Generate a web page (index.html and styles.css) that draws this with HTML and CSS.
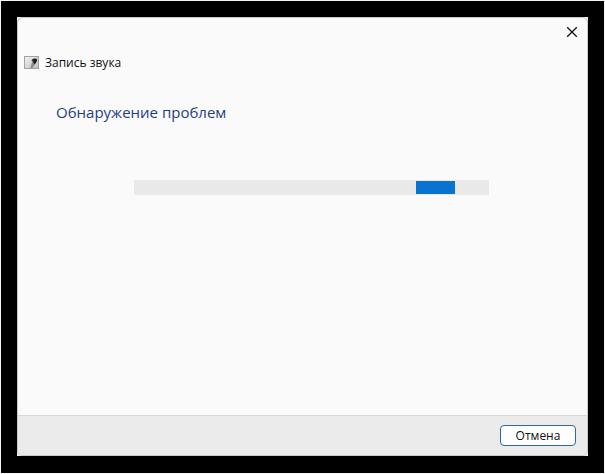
FILE: index.html
```html
<!DOCTYPE html>
<html lang="ru">
<head>
  <meta charset="UTF-8">
  <meta name="viewport" content="width=device-width, initial-scale=1.0">
  <title>Запись звука</title>
  <link rel="stylesheet" href="styles.css">
</head>
<body>

  <div class="backdrop">
    <div class="window-frame">
      <div class="window">

        <div class="title-bar">
          <button class="close-btn" type="button" aria-label="Закрыть">
            <svg width="12" height="12" viewBox="0 0 12 12">
              <path d="M1.2 1.2 L10.8 10.8 M10.8 1.2 L1.2 10.8" fill="none" stroke="#111" stroke-width="1.3"/>
            </svg>
          </button>
        </div>

        <header class="app-header">
          <!-- Microphone icon -->
          <svg class="app-icon" width="16" height="14" viewBox="0 0 16 14" aria-hidden="true">
            <defs>
              <linearGradient id="tile" x1="0" y1="0" x2="1" y2="1">
                <stop offset="0" stop-color="#f4f4f4"/>
                <stop offset="1" stop-color="#bdbdbd"/>
              </linearGradient>
            </defs>
            <rect x="0.5" y="0.5" width="14" height="12" fill="url(#tile)" stroke="#a2a2a2"/>
            <path d="M8.2 5.6 L11.4 7.6 L8.4 12.2 L6.2 12.2 Z" fill="#8c8c8c"/>
            <path d="M8 3.6 Q10.4 1.8 12.8 2.8 Q13.6 4.4 12.2 6.4 L10.4 8.6 L9.4 6.2 Z" fill="#1c1c1c"/>
            <circle cx="8.6" cy="4.6" r="1" fill="#444"/>
          </svg>
          <span class="app-name">Запись звука</span>
        </header>

        <main class="content">
          <h1 class="heading" id="heading">Обнаружение проблем</h1>
          <div class="progress" role="progressbar" aria-labelledby="heading">
            <div class="progress-chunk"></div>
          </div>
        </main>

        <footer class="footer">
          <button class="cancel-btn" type="button">Отмена</button>
        </footer>

      </div>
    </div>
  </div>

</body>
</html>
```
FILE: styles.css
```css
* {
  margin: 0;
  padding: 0;
  box-sizing: border-box;
}

body {
  min-height: 100vh;
  padding: 1px;
  display: flex;
  background-color: #f4f4f4;
  font-family: "Open Sans", "Noto Sans", sans-serif;
  font-size: 12px;
  color: #111;
}

/* Black area around the window */
.backdrop {
  flex: 1;
  display: flex;
  padding: 16px 16px 17px;
  background-color: #000;
}

/* Light corners behind the rounded window */
.window-frame {
  flex: 1;
  display: flex;
  background-color: #ececec;
}

.window {
  flex: 1;
  display: flex;
  flex-direction: column;
  overflow: hidden;
  border: 1px solid #c8c8c8;
  border-radius: 6px;
  background-color: #fafafa;
}

/* Title bar */
.title-bar {
  display: flex;
  justify-content: flex-end;
}

.close-btn {
  width: 30px;
  height: 28px;
  display: flex;
  align-items: center;
  justify-content: center;
  border: none;
  background: none;
}

.app-header {
  display: flex;
  align-items: center;
  gap: 5px;
  padding: 8px 6px 6px;
  line-height: 18px;
}

/* Content */
.content {
  flex: 1;
  padding: 24px 38px;
}

.heading {
  font-size: 15px;
  font-weight: normal;
  line-height: 20px;
  color: #1f3f7f;
}

.progress {
  height: 15px;
  margin: 58px 60px 0 78px;
  display: flex;
  align-items: center;
  background-color: #e9e9e9;
}

.progress-chunk {
  width: 11%;
  height: 13px;
  margin-left: 79.5%;
  background-color: #0873d1;
}

/* Footer */
.footer {
  display: flex;
  justify-content: flex-end;
  padding: 9px 11px;
  border-top: 1px solid #d9d9d9;
  background-color: #ebebeb;
}

.cancel-btn {
  width: 76px;
  height: 21px;
  border: 1px solid #2c6a9c;
  border-radius: 4px;
  background-color: #fdfdfd;
  font-family: inherit;
  font-size: 12px;
  line-height: 18px;
  color: #111;
}
```
